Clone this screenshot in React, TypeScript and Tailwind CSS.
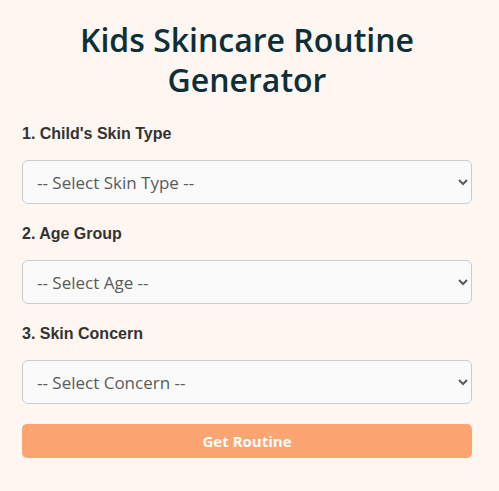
import React from "react";

function Field({ label, placeholder }: { label: string; placeholder: string }) {
  return (
    <div className="flex flex-col">
      <label className="mb-[16px] font-['Liberation_Sans',Arial,sans-serif] text-[16px] font-bold leading-[20px] text-[#333333]">
        {label}
      </label>
      <select
        className="h-[44px] w-full rounded-[6px] border border-[#cccccc] bg-[#fafafa] pl-[10px] pr-[6px] font-['Open_Sans','Noto_Sans',sans-serif] text-[17px] text-[#5a5a5a]"
        defaultValue=""
      >
        <option value="">{placeholder}</option>
      </select>
    </div>
  );
}

export default function App() {
  return (
    <div className="min-h-[491px] w-full bg-[#fef6f1] pt-[20px]">
      <div className="ml-[22px] w-[450px]">
        <h1 className="mb-[24px] text-center font-['Open_Sans','Noto_Sans',sans-serif] text-[32px] font-semibold leading-[40px] text-[#0d2f38]">
          Kids Skincare Routine
          <br />
          Generator
        </h1>
        <div className="flex flex-col gap-[20px]">
          <Field label="1. Child's Skin Type" placeholder="-- Select Skin Type --" />
          <Field label="2. Age Group" placeholder="-- Select Age --" />
          <Field label="3. Skin Concern" placeholder="-- Select Concern --" />
        </div>
        <button className="mt-[20px] h-[34px] w-full rounded-[5px] bg-[#fda572] font-['Open_Sans','Noto_Sans',sans-serif] text-[15px] font-bold text-white">
          Get Routine
        </button>
      </div>
    </div>
  );
}
